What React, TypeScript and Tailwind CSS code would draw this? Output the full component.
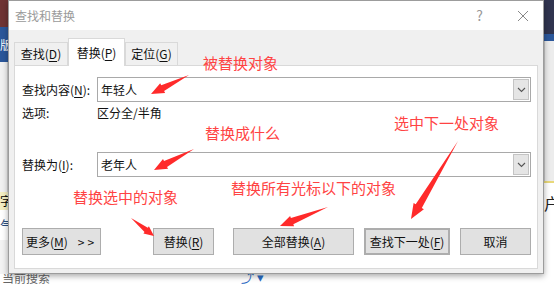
import React from 'react';

const UI = { fontFamily: '"Noto Sans CJK SC", "Noto Sans", sans-serif' };

type Arrow = { x1: number; y1: number; x2: number; y2: number; head?: number; width?: number };

const ARROWS: Arrow[] = [
  { x1: 189, y1: 75, x2: 151, y2: 94 },
  { x1: 194, y1: 149, x2: 154, y2: 170 },
  { x1: 458, y1: 141, x2: 411, y2: 219, head: 15, width: 12 },
  { x1: 131, y1: 218, x2: 154, y2: 236, head: 10, width: 9 },
  { x1: 328, y1: 207, x2: 280, y2: 226 },
];

const arrowPoints = ({ x1, y1, x2, y2, head = 13, width = 11 }: Arrow) => {
  const len = Math.hypot(x2 - x1, y2 - y1);
  const dx = (x2 - x1) / len;
  const dy = (y2 - y1) / len;
  const nx = -dy;
  const ny = dx;
  const cx = x2 - dx * head;
  const cy = y2 - dy * head;
  const body = width * 0.3;
  const pts = [
    [x1, y1],
    [cx + nx * body, cy + ny * body],
    [cx + nx * width / 2, cy + ny * width / 2],
    [x2, y2],
    [cx - nx * width / 2, cy - ny * width / 2],
    [cx - nx * body, cy - ny * body],
  ];
  return pts.map(p => p.map(v => v.toFixed(1)).join(',')).join(' ');
};

// letter with access-key underline
const Key = ({ children }: { children: React.ReactNode }) => (
  <span className="underline underline-offset-2">{children}</span>
);

const Combo = ({ value }: { value: string }) => (
  <div className="flex-1 h-[25px] flex items-stretch border border-[#a9a9a9] bg-white">
    <div className="flex-1 flex items-center pl-[3px] text-[12px] text-[#111]">{value}</div>
    <div className="w-[16px] my-px mr-px bg-[#e5e5e5] border border-[#c4c4c4] flex items-center justify-center">
      <svg width="9" height="6" viewBox="0 0 9 6">
        <path d="M1 1 L4.5 4.5 L8 1" fill="none" stroke="#555" strokeWidth="1.1" />
      </svg>
    </div>
  </div>
);

const Btn = ({ children, className = '' }: { children: React.ReactNode; className?: string }) => (
  <button className={`h-[27px] bg-[#e1e1e1] border border-[#adadad] text-[12px] text-[#111] flex items-center justify-center ${className}`}>
    {children}
  </button>
);

const Note = ({ text, className }: { text: string; className: string }) => (
  <div className={`absolute z-20 text-[15px] leading-none text-[#ff4343] whitespace-nowrap ${className}`}>{text}</div>
);

export default function App() {
  return (
    <div className="relative w-[554px] h-[285px] overflow-hidden bg-white" style={UI}>
      <div className="flex flex-col h-full">
        <div className="flex h-[274px]">
          {/* left background: the word window behind */}
          <div className="w-[8px] flex flex-col">
            <div className="h-[27px] bg-[#6f3434]" />
            <div className="h-[35px] bg-[#2b579a] text-white text-[12px] leading-[35px] overflow-hidden">版</div>
            <div className="h-[130px] bg-[#f1f1f1] border-r border-[#d0d0d0]" />
            <div className="h-[18px] bg-[#f4efc3] text-[12px] leading-[18px] overflow-hidden">字</div>
            <div className="h-[30px] bg-white text-[14px] leading-[30px] text-[#2b4f80] overflow-hidden">气</div>
            <div className="flex-1 bg-[#f3f3f3]" />
          </div>

          {/* dialog */}
          <div className="w-[537px] flex flex-col border border-[#9c9c9c] bg-[#f0f0f0] shadow-[0_2px_6px_rgba(0,0,0,0.35)] z-10">
            <div className="h-[29px] bg-white flex items-center pl-[6px] pr-[14px]">
              <span className="text-[12px] text-[#9a9a9a]">查找和替换</span>
              <span className="ml-auto mr-[34px] text-[14px] text-[#999]">?</span>
              <svg width="12" height="12" viewBox="0 0 12 12">
                <path d="M1 1 L11 11 M11 1 L1 11" stroke="#888" strokeWidth="1" />
              </svg>
            </div>

            <div className="flex-1 flex flex-col px-[5px] pt-[8px]">
              <div className="flex items-end h-[27px]">
                <div className="w-[54px] h-[24px] -mb-px border border-[#d9d9d9] bg-[#f0f0f0] flex items-center justify-center text-[12px] text-[#111]">
                  查找(<Key>D</Key>)
                </div>
                <div className="relative z-10 w-[57px] h-[28px] -mb-px border border-b-0 border-[#d9d9d9] bg-white flex items-center justify-center text-[12px] text-[#111]">
                  替换(<Key>P</Key>)
                </div>
                <div className="w-[53px] h-[24px] -mb-px border border-[#d9d9d9] bg-[#f0f0f0] flex items-center justify-center text-[12px] text-[#111]">
                  定位(<Key>G</Key>)
                </div>
              </div>

              <div className="h-[204px] bg-white border border-[#d9d9d9] pl-[7px] pr-[6px] pt-[11px] flex flex-col">
                <div className="flex items-center h-[25px]">
                  <span className="w-[75px] text-[12px] text-[#111]">查找内容(<Key>N</Key>):</span>
                  <Combo value="年轻人" />
                </div>
                <div className="flex items-center h-[16px] mt-[3px] text-[12px] text-[#111]">
                  <span className="w-[75px]">选项:</span>
                  <span>区分全/半角</span>
                </div>
                <div className="flex items-center h-[25px] mt-[31px]">
                  <span className="w-[75px] text-[12px] text-[#111]">替换为(<Key>I</Key>):</span>
                  <Combo value="老年人" />
                </div>
                <div className="flex items-center mt-[51px]">
                  <Btn className="w-[79px]">
                    更多(<Key>M</Key>)<span className="ml-[10px] tracking-[3px]">&gt;&gt;</span>
                  </Btn>
                  <Btn className="w-[61px] ml-[52px]">替换(<Key>R</Key>)</Btn>
                  <Btn className="w-[121px] ml-[19px]">全部替换(<Key>A</Key>)</Btn>
                  <Btn className="w-[86px] ml-[10px] border-2 border-[#0078d7]">查找下一处(<Key>F</Key>)</Btn>
                  <Btn className="w-[71px] ml-[10px]">取消</Btn>
                </div>
              </div>
            </div>
          </div>

          {/* right background */}
          <div className="flex-1 flex flex-col">
            <div className="h-[34px] bg-[#30344f]" />
            <div className="h-[7px] bg-[#2b579a]" />
            <div className="h-[140px] bg-[#ececec] border-l border-[#c9c9c9]" />
            <div className="h-[2px] bg-[#e8d87a]" />
            <div className="flex-1 bg-white text-[16px] leading-[40px] text-[#222] overflow-hidden">户</div>
          </div>
        </div>
        <div className="flex-1 flex items-start bg-white overflow-hidden">
          <span className="ml-[2px] -mt-[3px] text-[12px] leading-[14px] text-[#666]">当前搜索</span>
          <span className="ml-auto mr-[290px] -mt-[4px] text-[13px] leading-[14px] text-[#2b6cc4]">⤴ ▾</span>
        </div>
      </div>

      {/* annotations drawn on top of the screenshot */}
      <Note text="被替换对象" className="left-[203px] top-[55px]" />
      <Note text="替换成什么" className="left-[205px] top-[125px]" />
      <Note text="选中下一处对象" className="left-[394px] top-[115px]" />
      <Note text="替换选中的对象" className="left-[73px] top-[189px]" />
      <Note text="替换所有光标以下的对象" className="left-[231px] top-[180px]" />
      <svg className="absolute inset-0 pointer-events-none z-20" width="554" height="285">
        {ARROWS.map((a, i) => (
          <polygon key={i} points={arrowPoints(a)} fill="#ff2a2a" />
        ))}
      </svg>
    </div>
  );
}
